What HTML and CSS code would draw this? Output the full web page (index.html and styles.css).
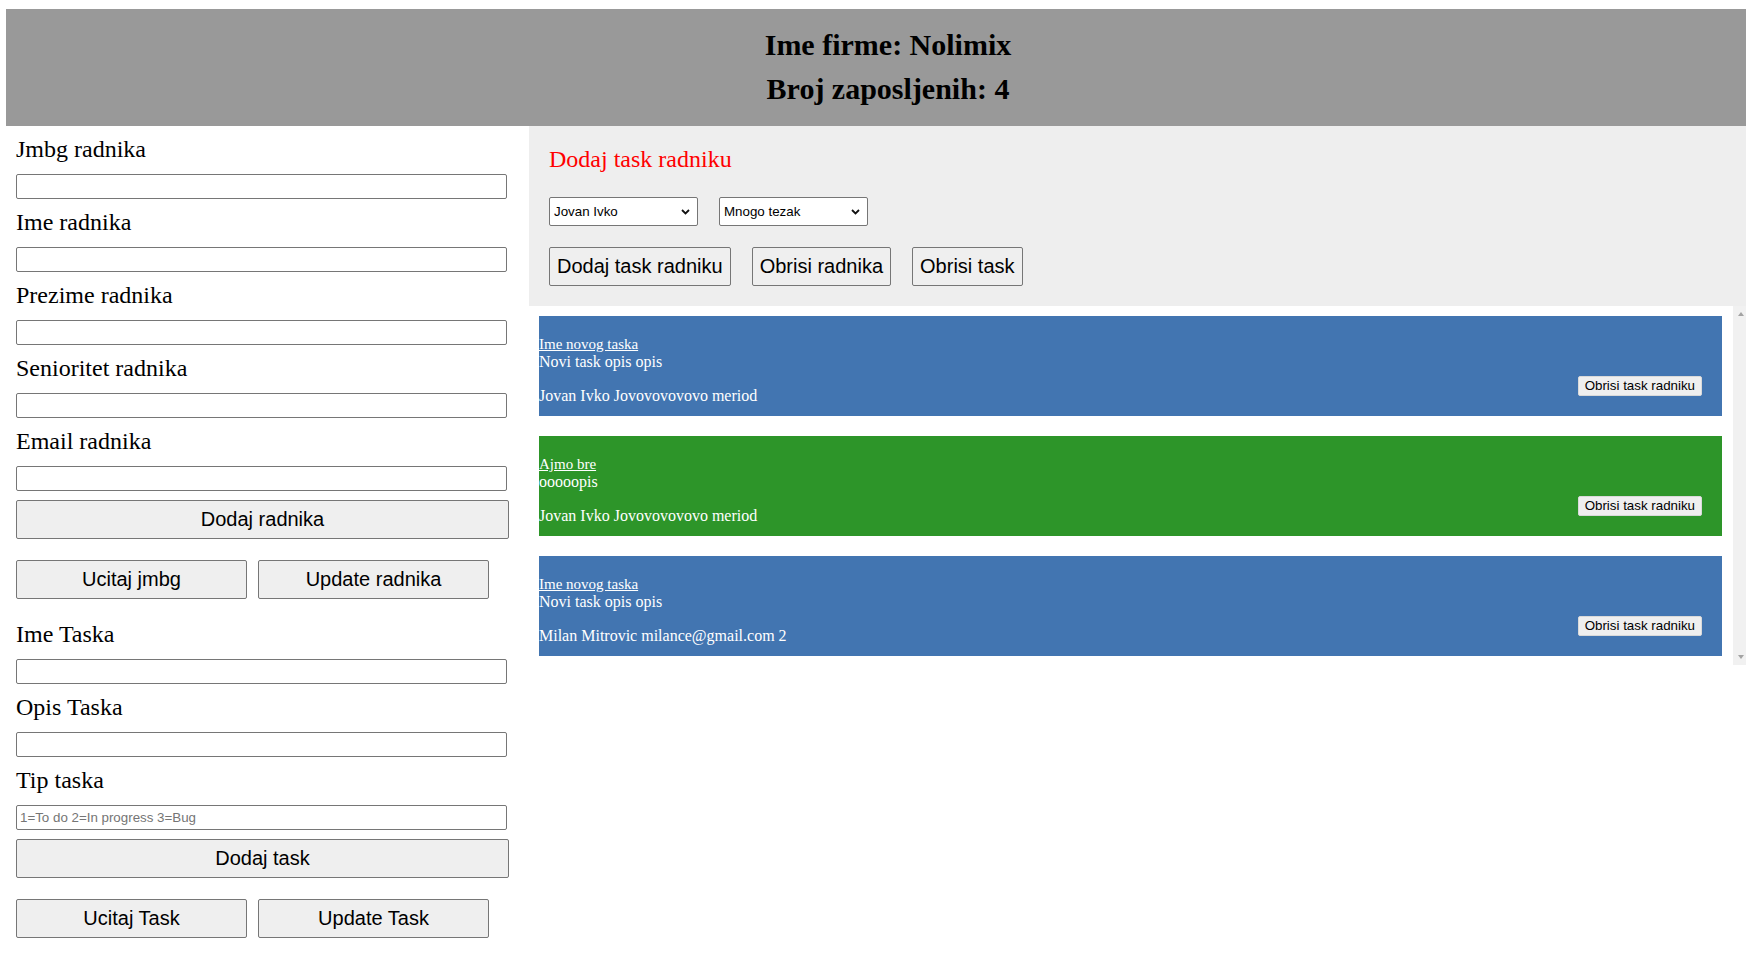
FILE: index.html
```html
<!DOCTYPE html>
<html lang="sr">
<head>
<meta charset="utf-8">
<title>Nolimix</title>
<link rel="stylesheet" href="styles.css">
</head>
<body>
<div class="page">
  <header class="company">
    <h1 class="company-line">Ime firme: Nolimix</h1>
    <h1 class="company-line">Broj zaposljenih: 4</h1>
  </header>
  <div class="main">
    <aside class="forms">
      <div class="form-block">
        <div class="field"><label class="field-label">Jmbg radnika</label><input class="field-input" type="text"></div>
        <div class="field"><label class="field-label">Ime radnika</label><input class="field-input" type="text"></div>
        <div class="field"><label class="field-label">Prezime radnika</label><input class="field-input" type="text"></div>
        <div class="field"><label class="field-label">Senioritet radnika</label><input class="field-input" type="text"></div>
        <div class="field"><label class="field-label">Email radnika</label><input class="field-input" type="text"></div>
        <button class="btn btn-wide">Dodaj radnika</button>
        <div class="btn-row">
          <button class="btn btn-half">Ucitaj jmbg</button>
          <button class="btn btn-half">Update radnika</button>
        </div>
      </div>
      <div class="form-block">
        <div class="field"><label class="field-label">Ime Taska</label><input class="field-input" type="text"></div>
        <div class="field"><label class="field-label">Opis Taska</label><input class="field-input" type="text"></div>
        <div class="field"><label class="field-label">Tip taska</label><input class="field-input" type="text" placeholder="1=To do 2=In progress 3=Bug"></div>
        <button class="btn btn-wide">Dodaj task</button>
        <div class="btn-row">
          <button class="btn btn-half">Ucitaj Task</button>
          <button class="btn btn-half">Update Task</button>
        </div>
      </div>
    </aside>
    <section class="tasks">
      <div class="assign">
        <h2 class="assign-title">Dodaj task radniku</h2>
        <div class="assign-selects">
          <div class="select-wrap">
            <select class="assign-select"><option>Jovan Ivko</option></select>
            <svg class="select-chevron" width="9" height="6" viewBox="0 0 9 6"><path d="M1 1 L4.5 4.5 L8 1" fill="none" stroke="#111" stroke-width="1.8"/></svg>
          </div>
          <div class="select-wrap">
            <select class="assign-select"><option>Mnogo tezak</option></select>
            <svg class="select-chevron" width="9" height="6" viewBox="0 0 9 6"><path d="M1 1 L4.5 4.5 L8 1" fill="none" stroke="#111" stroke-width="1.8"/></svg>
          </div>
        </div>
        <div class="assign-actions">
          <button class="btn">Dodaj task radniku</button>
          <button class="btn">Obrisi radnika</button>
          <button class="btn">Obrisi task</button>
        </div>
      </div>
      <div class="list-wrap">
        <div class="task-list">
          <div class="task-card task-card--blue">
            <div class="task-info">
              <a class="task-title" href="#">Ime novog taska</a>
              <div class="task-desc">Novi task opis opis</div>
              <div class="task-owner">Jovan Ivko Jovovovovovo meriod</div>
            </div>
            <button class="task-delete">Obrisi task radniku</button>
          </div>
          <div class="task-card task-card--green">
            <div class="task-info">
              <a class="task-title" href="#">Ajmo bre</a>
              <div class="task-desc">ooooopis</div>
              <div class="task-owner">Jovan Ivko Jovovovovovo meriod</div>
            </div>
            <button class="task-delete">Obrisi task radniku</button>
          </div>
          <div class="task-card task-card--blue">
            <div class="task-info">
              <a class="task-title" href="#">Ime novog taska</a>
              <div class="task-desc">Novi task opis opis</div>
              <div class="task-owner">Milan Mitrovic milance@gmail.com 2</div>
            </div>
            <button class="task-delete">Obrisi task radniku</button>
          </div>
        </div>
        <div class="scrollbar"><span class="arrow-up"></span><span class="arrow-down"></span></div>
      </div>
    </section>
  </div>
</div>
</body>
</html>
```
FILE: styles.css
```css
html, body {
  margin: 0;
  padding: 0;
  background: #fff;
}

body {
  font-family: "Liberation Serif", "Times New Roman", serif;
  color: #000;
  overflow: hidden;
}

.page {
  padding: 9px 0 0 6px;
}

.company {
  background: #999999;
  padding: 14px 0 15px 24px;
  text-align: center;
}

.company-line {
  margin: 0;
  font: bold 30px/44px "Liberation Serif", "Times New Roman", serif;
  color: #000;
}

.main {
  display: flex;
}

.forms {
  flex: none;
  width: 523px;
  box-sizing: border-box;
  padding: 9px 0 0 10px;
}

.form-block + .form-block {
  margin-top: 21px;
}

.field-label {
  display: block;
  font: 24px/28px "Liberation Serif", "Times New Roman", serif;
}

.field-input {
  display: block;
  box-sizing: border-box;
  width: 491px;
  height: 25px;
  margin: 11px 0 9px;
  padding: 1px 3px;
  border: 1px solid #767676;
  border-radius: 2px;
  background: #fff;
  font: 13.33px "Liberation Sans", Arial, sans-serif;
}

.field-input::placeholder {
  color: #757575;
}

.btn {
  box-sizing: border-box;
  font: 20px/23px "Liberation Sans", Arial, sans-serif;
  color: #000;
  padding: 7px 7px;
  border: 1px solid #767676;
  border-radius: 2px;
  background: #efefef;
}

.btn-wide {
  display: block;
  width: 493px;
  margin-top: 3px;
}

.btn-row {
  display: flex;
  gap: 11px;
  margin-top: 21px;
}

.btn-half {
  width: 231px;
}

.tasks {
  flex: 1;
  min-width: 0;
}

.assign {
  background: #eeeeee;
  padding: 19px 20px 20px;
}

.assign-title {
  margin: 0 0 24px;
  font: normal 24px/28px "Liberation Serif", "Times New Roman", serif;
  color: #ff0000;
}

.assign-selects {
  display: flex;
  gap: 21px;
  margin-bottom: 21px;
}

.select-wrap {
  position: relative;
  display: flex;
}

.assign-select {
  box-sizing: border-box;
  width: 149px;
  height: 29px;
  padding: 0 20px 0 4px;
  border: 1px solid #767676;
  border-radius: 2px;
  background: #fff;
  font: 13.33px "Liberation Sans", Arial, sans-serif;
  color: #000;
  appearance: none;
  -webkit-appearance: none;
}

.select-chevron {
  position: absolute;
  right: 8px;
  top: 12px;
  pointer-events: none;
}

.assign-actions {
  display: flex;
  gap: 21px;
}

.list-wrap {
  display: flex;
  height: 359px;
}

.task-list {
  flex: 1;
  display: flex;
  flex-direction: column;
  gap: 20px;
  padding: 10px 11px 9px 10px;
}

.task-card {
  height: 100px;
  flex: none;
  display: flex;
  justify-content: space-between;
  align-items: flex-end;
  color: #fff;
  font: 16px/18px "Liberation Serif", "Times New Roman", serif;
}

.task-card--blue {
  background: #4275b1;
}

.task-card--green {
  background: #2d9529;
}

.task-info {
  align-self: flex-start;
  padding-top: 19px;
}

.task-title {
  color: #fff;
  font-size: 15px;
  text-decoration: underline;
}

.task-owner {
  margin-top: 16px;
}

.task-delete {
  margin: 0 20px 20px 0;
  height: 20px;
  padding: 0 6px;
  border: 1px solid #d9d9d9;
  border-radius: 2px;
  background: #efefef;
  color: #000;
  font: 13.33px/16px "Liberation Sans", Arial, sans-serif;
}

.scrollbar {
  flex: none;
  width: 13px;
  box-sizing: border-box;
  background: #f1f1f1;
  display: flex;
  flex-direction: column;
  justify-content: space-between;
  padding: 6px 0 6px 5px;
}

.arrow-up,
.arrow-down {
  display: block;
  width: 0;
  height: 0;
  border-left: 3.5px solid transparent;
  border-right: 3.5px solid transparent;
}

.arrow-up {
  border-bottom: 4px solid #a3a3a3;
}

.arrow-down {
  border-top: 4px solid #a3a3a3;
}
```
